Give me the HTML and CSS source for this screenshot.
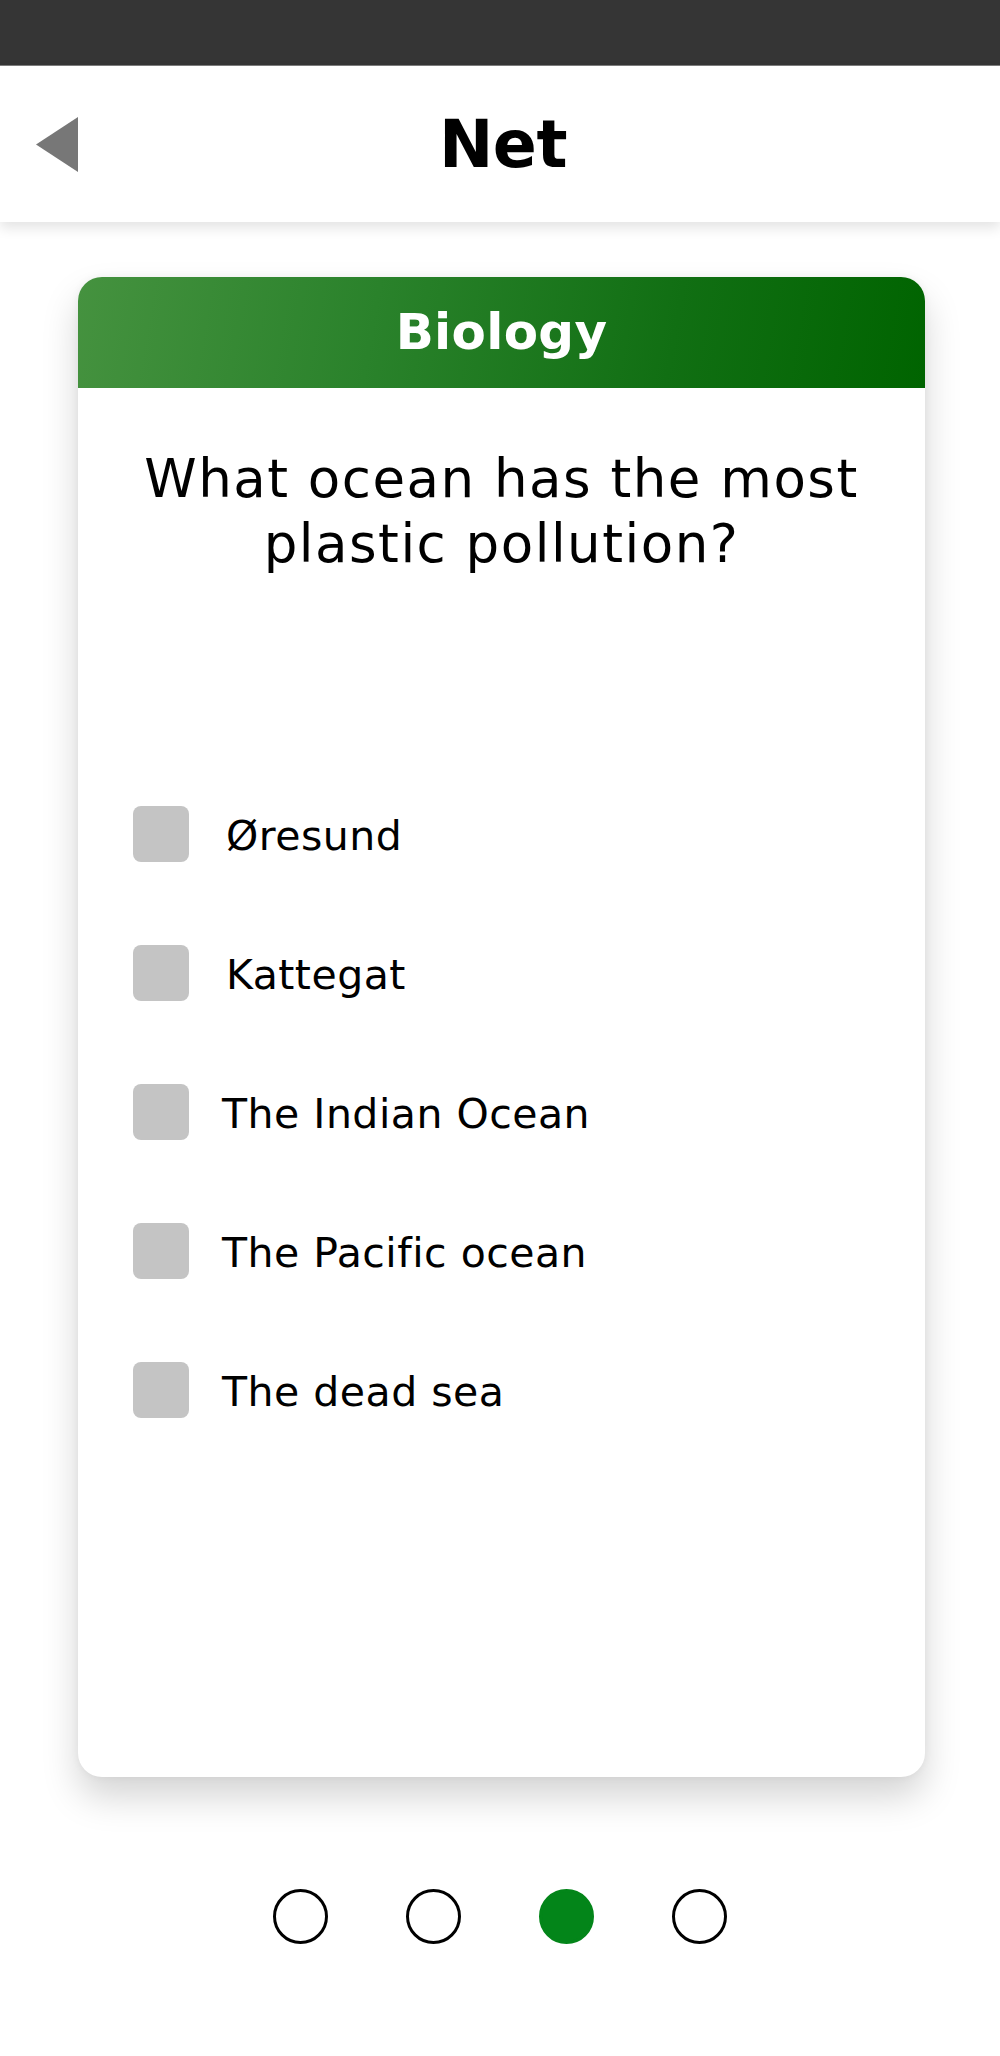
FILE: index.html
```html
<!DOCTYPE html>
<html lang="en">
<head>
<meta charset="utf-8">
<title>Net</title>
<link rel="stylesheet" href="styles.css">
</head>
<body>
<div class="status-bar"></div>
<header class="app-header">
  <button class="back" aria-label="Back">
    <svg width="42" height="55" viewBox="0 0 42 55"><polygon points="0,27.5 42,0 42,55" fill="#777777"/></svg>
  </button>
  <h1 class="title">Net</h1>
</header>
<main class="content">
  <section class="card">
    <div class="card-head">Biology</div>
    <div class="card-body">
      <p class="question">What ocean has the most plastic pollution?</p>
      <ul class="options">
        <li class="option"><span class="box"></span><span class="label shift">Øresund</span></li>
        <li class="option"><span class="box"></span><span class="label shift">Kattegat</span></li>
        <li class="option"><span class="box"></span><span class="label">The Indian Ocean</span></li>
        <li class="option"><span class="box"></span><span class="label">The Pacific ocean</span></li>
        <li class="option"><span class="box"></span><span class="label">The dead sea</span></li>
      </ul>
    </div>
  </section>
  <nav class="dots">
    <span class="dot"></span>
    <span class="dot"></span>
    <span class="dot active"></span>
    <span class="dot"></span>
  </nav>
</main>
</body>
</html>
```
FILE: styles.css
```css
* { box-sizing: border-box; }
html, body {
  margin: 0;
  padding: 0;
  background: #ffffff;
  font-family: "DejaVu Sans", "Noto Sans", sans-serif;
  color: #000;
}
.status-bar {
  height: 66px;
  background: #353535;
  border-bottom: 1px solid #7d7d7d;
}
.app-header {
  position: relative;
  z-index: 2;
  height: 156px;
  background: #fff;
  display: flex;
  align-items: center;
  justify-content: center;
  box-shadow: 0 6px 12px rgba(0,0,0,0.11);
}
.back {
  position: absolute;
  left: 36px;
  top: 51px;
  padding: 0;
  border: 0;
  background: none;
  line-height: 0;
}
.title {
  margin: 0;
  font-size: 65px;
  font-weight: bold;
  letter-spacing: -0.5px;
  line-height: 1;
  padding-left: 6px;
}
.content {
  padding-top: 55px;
  display: flex;
  flex-direction: column;
  align-items: flex-start;
}
.card {
  margin-left: 78px;
  width: 847px;
  border-radius: 24px;
  background: #fff;
  box-shadow: 0 20px 36px rgba(0,0,0,0.17), 0 0 8px rgba(0,0,0,0.05);
  overflow: hidden;
}
.card-head {
  height: 111px;
  background: linear-gradient(100deg, #45923f 0%, #2a822b 35%, #116f13 70%, #006400 100%);
  color: #fff;
  font-weight: bold;
  font-size: 50px;
  letter-spacing: 0.3px;
  display: flex;
  align-items: center;
  justify-content: center;
  padding-bottom: 2px;
}
.card-body {
  padding: 58px 30px 359px 55px;
}
.question {
  margin: 0;
  font-size: 53px;
  line-height: 65px;
  letter-spacing: 1.5px;
  text-align: center;
  padding-right: 25px;
}
.options {
  list-style: none;
  margin: 230px 0 0;
  padding: 0;
  display: flex;
  flex-direction: column;
  gap: 83px;
}
.option {
  height: 56px;
  display: flex;
  align-items: center;
  gap: 33px;
}
.box {
  width: 56px;
  height: 56px;
  border-radius: 8px;
  background: #c4c4c4;
  flex: none;
}
.label {
  font-size: 41px;
  letter-spacing: 0.5px;
  padding-top: 4px;
}
.label.shift { padding-left: 4px; }
.dots {
  align-self: center;
  margin-top: 112px;
  display: flex;
  gap: 78px;
}
.dot {
  width: 55px;
  height: 55px;
  border-radius: 50%;
  border: 3px solid #000;
}
.dot.active {
  background: #038519;
  border-color: #038519;
}
```
